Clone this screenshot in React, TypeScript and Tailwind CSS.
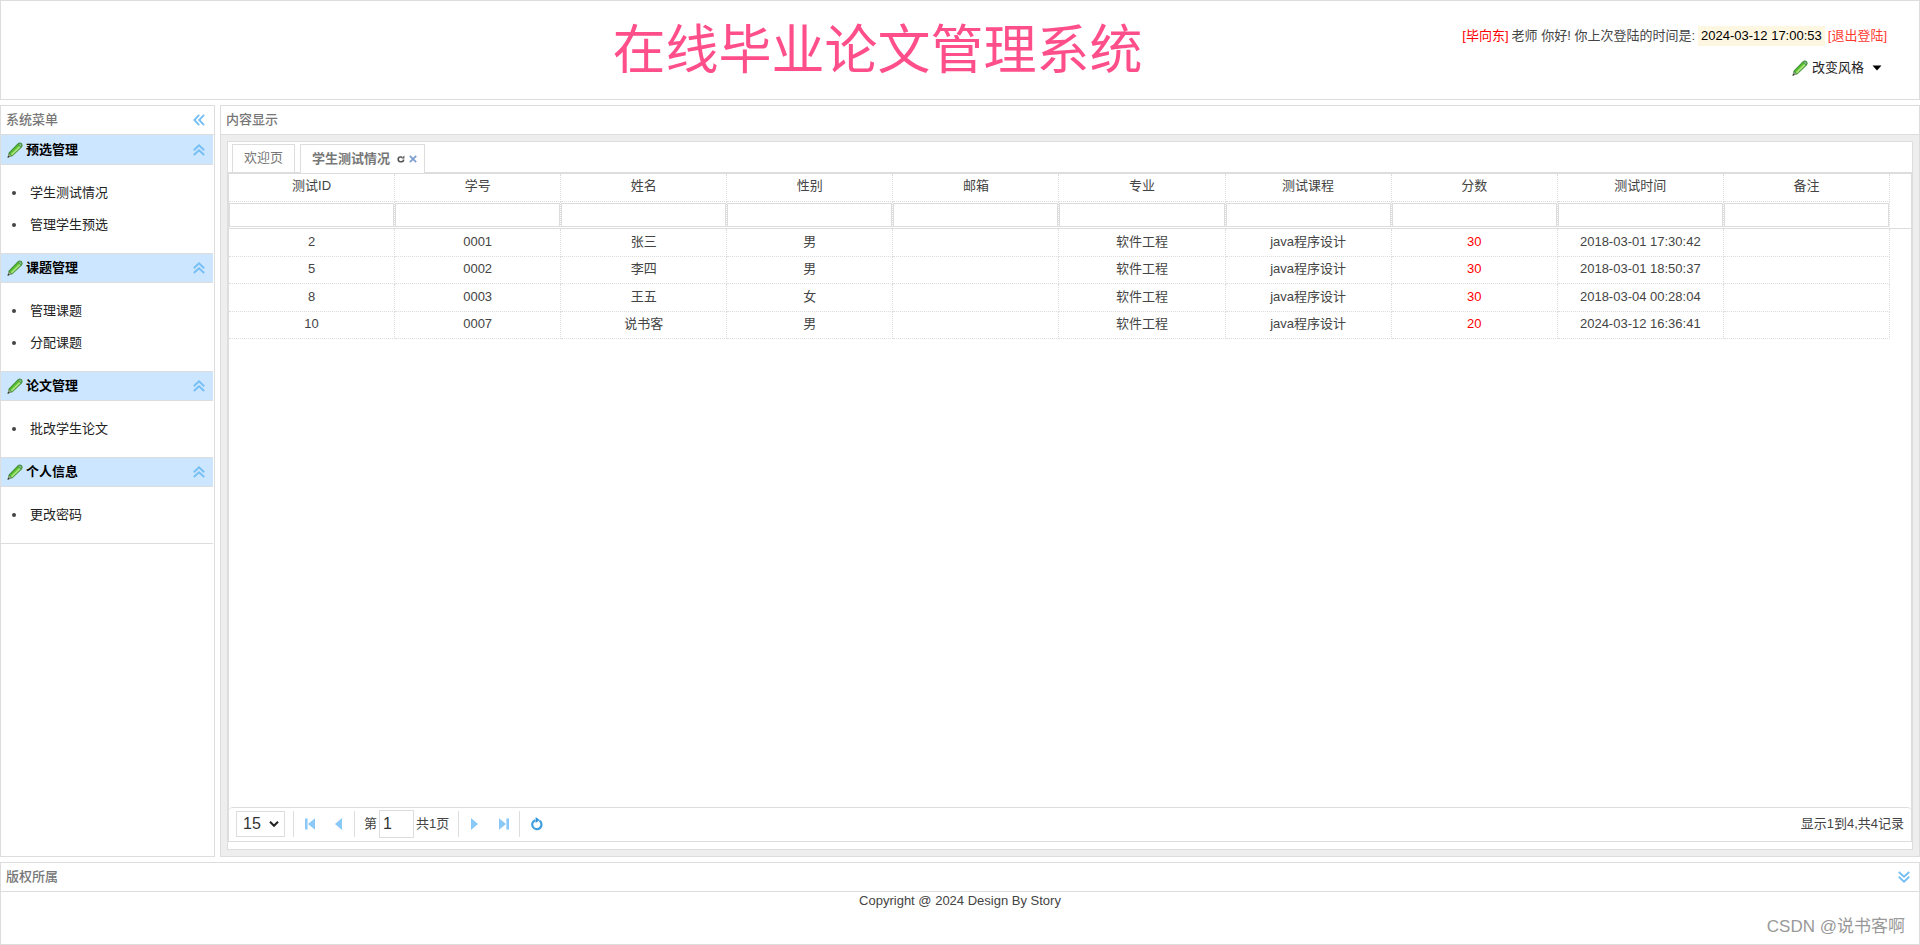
import { useState } from 'react';

type MenuGroup = { title: string; items: string[] };

type TestRecord = {
  id: number;
  no: string;
  name: string;
  sex: string;
  email: string;
  major: string;
  course: string;
  score: number;
  time: string;
  remark: string;
};

const menuGroups: MenuGroup[] = [
  { title: '预选管理', items: ['学生测试情况', '管理学生预选'] },
  { title: '课题管理', items: ['管理课题', '分配课题'] },
  { title: '论文管理', items: ['批改学生论文'] },
  { title: '个人信息', items: ['更改密码'] },
];

const columns: { key: keyof TestRecord; label: string }[] = [
  { key: 'id', label: '测试ID' },
  { key: 'no', label: '学号' },
  { key: 'name', label: '姓名' },
  { key: 'sex', label: '性别' },
  { key: 'email', label: '邮箱' },
  { key: 'major', label: '专业' },
  { key: 'course', label: '测试课程' },
  { key: 'score', label: '分数' },
  { key: 'time', label: '测试时间' },
  { key: 'remark', label: '备注' },
];

const records: TestRecord[] = [
  { id: 2, no: '0001', name: '张三', sex: '男', email: '', major: '软件工程', course: 'java程序设计', score: 30, time: '2018-03-01 17:30:42', remark: '' },
  { id: 5, no: '0002', name: '李四', sex: '男', email: '', major: '软件工程', course: 'java程序设计', score: 30, time: '2018-03-01 18:50:37', remark: '' },
  { id: 8, no: '0003', name: '王五', sex: '女', email: '', major: '软件工程', course: 'java程序设计', score: 30, time: '2018-03-04 00:28:04', remark: '' },
  { id: 10, no: '0007', name: '说书客', sex: '男', email: '', major: '软件工程', course: 'java程序设计', score: 20, time: '2024-03-12 16:36:41', remark: '' },
];

function Pencil() {
  return (
    <svg viewBox="0 0 16 16" className="h-4 w-4 shrink-0" aria-hidden="true">
      <path d="M0.6 15.6 1.6 10.8 10.6 1.4Q12.8-0.4 14.8 1.2 16.4 3.2 14.7 5.4L5.4 14.2Z" fill="#3f8f3a" />
      <path d="M2.6 11.2 11 2.6 13.6 5.2 5 13.4Z" fill="#56c02b" />
      <path d="M3.7 12.3 12.1 3.9 13.5 5.2 5 13.4Z" fill="#a8e07c" />
      <path d="M11.4 2.2Q13 0.9 14.1 1.9 15.2 3 14 4.8Z" fill="#86b58a" />
      <path d="M0.6 15.6 1.6 11.4 4.8 14.2Z" fill="#9aa68c" />
      <path d="M0.5 15.7 1.2 13.4 2.9 14.9Z" fill="#333" />
    </svg>
  );
}

function DoubleChevron({ className }: { className: string }) {
  return (
    <svg viewBox="0 0 12 12" className={`h-3 w-3 shrink-0 ${className}`} fill="none" stroke="#76bff5" strokeWidth="1.9" aria-hidden="true">
      <path d="M0.8 6.2 6 1.4l5.2 4.8M0.8 11 6 6.2l5.2 4.8" />
    </svg>
  );
}

function Divider() {
  return <div className="h-[26px] w-px bg-[#ddd]" />;
}

function Header() {
  return (
    <header className="grid h-25 shrink-0 border border-[#ddd]">
      <h1 className="col-start-1 row-start-1 pt-[14px] pr-[165px] text-center text-[53px] leading-[72px] text-[#ff4f8b]">
        在线毕业论文管理系统
      </h1>
      <div className="col-start-1 row-start-1 flex flex-col items-end justify-self-end pt-[25px] pr-8">
        <p className="flex h-5 items-center gap-[3px] whitespace-pre">
          <span className="text-[#f00]">[毕向东]</span>
          <span>老师 你好! 你上次登陆的时间是:</span>
          <time className="h-5 bg-[#fdf6e0] px-[3px] leading-5 text-black">2024-03-12 17:00:53</time>
          <a href="#logout" className="text-[#ff3a2f]">[退出登陆]</a>
        </p>
        <button type="button" className="mt-3 flex h-5 items-center gap-1 pr-[5px] text-[#222]">
          <Pencil />
          改变风格
          <svg viewBox="0 0 10 6" className="ml-1 h-[6px] w-[10px]" aria-hidden="true">
            <path d="M0.5 0.5h9L5 5.5Z" fill="#000" />
          </svg>
        </button>
      </div>
    </header>
  );
}

function Sidebar() {
  return (
    <aside className="flex w-[215px] shrink-0 flex-col border border-[#ddd]">
      <div className="flex h-[29px] shrink-0 items-center justify-between border-b border-[#ddd] pr-[9px] pb-px pl-[5px]">
        <h2 className="font-medium text-[#777]">系统菜单</h2>
        <button type="button" aria-label="折叠菜单">
          <DoubleChevron className="-rotate-90" />
        </button>
      </div>
      <nav className="mr-px border-b border-[#ddd]">
        {menuGroups.map((group, i) => (
          <section key={group.title}>
            <button
              type="button"
              className={`flex h-[30px] w-full items-center border-b border-[#ddd] bg-[#cce6ff] pr-2 pl-[6px] ${i > 0 ? 'border-t' : ''}`}
            >
              <Pencil />
              <span className="ml-[3px] font-bold text-black">{group.title}</span>
              <DoubleChevron className="ml-auto" />
            </button>
            <ul className="py-3">
              {group.items.map((item) => (
                <li key={item} className="flex h-8 items-center pl-[11px] text-[#222]">
                  <span className="mr-[14px] h-1 w-1 rounded-full bg-[#444]" />
                  <a href="#content">{item}</a>
                </li>
              ))}
            </ul>
          </section>
        ))}
      </nav>
    </aside>
  );
}

function Tabs() {
  return (
    <div className="flex h-[31px] shrink-0 items-end gap-[5px] border-b border-[#ddd] pl-1">
      <button type="button" className="h-7 border border-b-0 border-[#ddd] px-[11px] pb-px text-[#777]">
        欢迎页
      </button>
      <div className="-mb-px flex h-[29px] items-center border border-b-0 border-[#ddd] bg-white pr-[7px] pb-px pl-[11px]">
        <button type="button" className="font-bold text-[#777]">学生测试情况</button>
        <button type="button" className="ml-[7px]" aria-label="刷新标签">
          <svg viewBox="0 0 8 8" className="h-2 w-2" fill="none" stroke="#555" strokeWidth="1.6" aria-hidden="true">
            <path d="M5.2 2H3.4Q1.2 2 1.2 4.2T3.4 6.8h1.2Q6.6 6.8 6.6 4.6" />
            <path d="M4.2 3.6H7.4V0.4Z" fill="#555" stroke="none" />
          </svg>
        </button>
        <button type="button" className="ml-1" aria-label="关闭标签">
          <svg viewBox="0 0 8 8" className="h-2 w-2" stroke="#7f9fd0" strokeWidth="1.8" aria-hidden="true">
            <path d="M0.8 0.8 7.2 7.2M7.2 0.8 0.8 7.2" />
          </svg>
        </button>
      </div>
    </div>
  );
}

function DataGrid() {
  return (
    <table className="w-full table-fixed border-separate border-spacing-0 text-center">
      <colgroup>
        {columns.map((col) => (
          <col key={col.key} />
        ))}
        <col className="w-[21px]" />
      </colgroup>
      <thead>
        <tr className="h-7">
          {columns.map((col) => (
            <th key={col.key} className="border-r border-b border-dotted border-[#ddd] p-0 pb-1 font-normal">
              {col.label}
            </th>
          ))}
          <td className="p-0" />
        </tr>
        <tr className="h-[27px]">
          {columns.map((col) => (
            <td key={col.key} className="border-r border-b border-[#ddd] p-0 [border-right-style:dotted]">
              <input aria-label={col.label} className="block h-6 w-full border border-[#ddd] px-1 outline-none" />
            </td>
          ))}
          <td className="border-b border-[#ddd] p-0" />
        </tr>
      </thead>
      <tbody>
        {records.map((row) => (
          <tr key={row.id} className="odd:h-7 even:h-[27px]">
            {columns.map((col) => (
              <td
                key={col.key}
                className={`border-r border-b border-dotted border-[#ddd] p-0 pb-[2px] ${col.key === 'score' ? 'text-[#f00]' : ''}`}
              >
                {row[col.key]}
              </td>
            ))}
            <td className="p-0" />
          </tr>
        ))}
      </tbody>
    </table>
  );
}

function Pager() {
  const [page, setPage] = useState('1');

  return (
    <div className="flex h-[34px] shrink-0 items-center rounded-t border-t border-[#ddd] px-[7px] pb-px">
      <div className="relative">
        <select aria-label="每页条数" defaultValue="15" className="block h-[26px] w-[49px] appearance-none border border-[#ddd] bg-white pl-[6px] text-base leading-6 text-[#333]">
          <option>15</option>
          <option>30</option>
          <option>50</option>
        </select>
        <svg viewBox="0 0 10 6" className="pointer-events-none absolute top-[10px] right-[6px] h-[6px] w-[10px]" fill="none" stroke="#222" strokeWidth="2" aria-hidden="true">
          <path d="M1 0.8 5 4.8 9 0.8" />
        </svg>
      </div>
      <div className="ml-2 flex items-center">
        <Divider />
        <button type="button" className="ml-[11px]" aria-label="首页">
          <svg viewBox="0 0 10 12" className="h-3 w-[10px]" fill="#8ac8f8" aria-hidden="true">
            <path d="M0 0.5h2.6v11H0ZM10 0.2v11.6L3 6Z" />
          </svg>
        </button>
        <button type="button" className="ml-5" aria-label="上一页">
          <svg viewBox="0 0 7 12" className="h-3 w-[7px]" fill="#8ac8f8" aria-hidden="true">
            <path d="M7 0v12L0 6Z" />
          </svg>
        </button>
      </div>
      <div className="ml-3 flex items-center">
        <Divider />
        <label htmlFor="page" className="ml-[9px]">第</label>
        <input
          id="page"
          value={page}
          onChange={(e) => setPage(e.target.value)}
          className="mx-[2px] h-7 w-[35px] border border-[#ddd] px-[3px] text-base text-[#333] outline-none"
        />
        <span>共1页</span>
      </div>
      <div className="ml-[9px] flex items-center">
        <Divider />
        <button type="button" className="ml-3" aria-label="下一页">
          <svg viewBox="0 0 7 12" className="h-3 w-[7px]" fill="#8ac8f8" aria-hidden="true">
            <path d="M0 0v12L7 6Z" />
          </svg>
        </button>
        <button type="button" className="ml-[21px]" aria-label="尾页">
          <svg viewBox="0 0 10 12" className="h-3 w-[10px]" fill="#8ac8f8" aria-hidden="true">
            <path d="M7.4 0.5H10v11H7.4ZM0 0.2v11.6L7 6Z" />
          </svg>
        </button>
      </div>
      <div className="ml-[10px] flex items-center">
        <Divider />
        <button type="button" className="ml-[11px]" aria-label="刷新">
          <svg viewBox="0 0 12 14" className="h-[14px] w-3" fill="none" stroke="#3f9fe0" strokeWidth="2.2" aria-hidden="true">
            <path d="M8.4 3.7A4.6 4.6 0 1 1 4.4 3.2" />
            <path d="M4.6 0 8.6 3 4.6 6Z" fill="#2f93dc" stroke="none" />
          </svg>
        </button>
      </div>
      <span className="ml-auto">显示1到4,共4记录</span>
    </div>
  );
}

function Content() {
  return (
    <main id="content" className="flex min-w-0 flex-1 flex-col border border-[#ddd]">
      <div className="flex h-[29px] shrink-0 items-center border-b border-[#ddd] pb-px pl-[5px]">
        <h2 className="font-medium text-[#777]">内容显示</h2>
      </div>
      <div className="flex flex-1 flex-col bg-[#eee] p-[6px]">
        <div className="flex flex-1 flex-col border border-[#ddd] bg-white pb-[7px]">
          <Tabs />
          <div className="flex flex-1 flex-col border border-[#ddd]">
            <div className="flex-1">
              <DataGrid />
            </div>
            <Pager />
          </div>
        </div>
      </div>
    </main>
  );
}

function Footer() {
  return (
    <footer className="relative h-[83px] shrink-0 border border-[#ddd]">
      <div className="flex h-[29px] items-center justify-between border-b border-[#ddd] pr-[9px] pb-px pl-[5px]">
        <h2 className="font-medium text-[#777]">版权所属</h2>
        <button type="button" aria-label="折叠版权">
          <DoubleChevron className="rotate-180" />
        </button>
      </div>
      <p className="text-center leading-[18px]">Copyright @ 2024 Design By Story</p>
      <span className="absolute right-[14px] bottom-[5px] text-[17px] leading-6 text-[#999]">CSDN @说书客啊</span>
    </footer>
  );
}

export default function App() {
  return (
    <div className="flex min-h-screen flex-col gap-[5px] bg-white font-['Liberation_Sans','Noto_Sans_CJK_SC',sans-serif] text-[13px] leading-5 text-[#444]">
      <Header />
      <div className="flex flex-1 gap-[5px]">
        <Sidebar />
        <Content />
      </div>
      <Footer />
    </div>
  );
}
